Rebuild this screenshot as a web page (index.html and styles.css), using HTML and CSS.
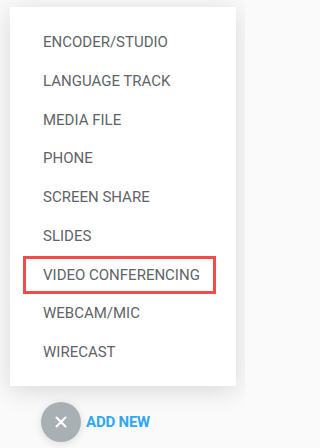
FILE: index.html
```html
<!DOCTYPE html>
<html>
<head>
<meta charset="utf-8">
<link rel="stylesheet" href="styles.css">
</head>
<body>
<div class="page">
  <ul class="menu">
    <li class="item">ENCODER/STUDIO</li>
    <li class="item">LANGUAGE TRACK</li>
    <li class="item">MEDIA FILE</li>
    <li class="item">PHONE</li>
    <li class="item">SCREEN SHARE</li>
    <li class="item">SLIDES</li>
    <li class="item item-selected">VIDEO CONFERENCING</li>
    <li class="item">WEBCAM/MIC</li>
    <li class="item">WIRECAST</li>
  </ul>
  <div class="add-row">
    <button class="close-btn" aria-label="Close">
      <svg width="12" height="12" viewBox="0 0 12 12"><path d="M1.5 1.5 L10.5 10.5 M10.5 1.5 L1.5 10.5" stroke="#fff" stroke-width="2" stroke-linecap="round"/></svg>
    </button>
    <span class="add-label">ADD NEW</span>
  </div>
</div>
</body>
</html>
```
FILE: styles.css
```css
html, body {
  margin: 0;
  padding: 0;
  background: #fafafa;
}
body {
  font-family: Roboto, "Liberation Sans", sans-serif;
  width: 245px;
  height: 448px;
  overflow: hidden;
}
.page {
  padding: 7px 9px 0 10px;
}
.menu {
  list-style: none;
  margin: 0;
  padding: 16px 0 14px 0;
  background: #fff;
  box-shadow: 0 4px 24px rgba(0, 0, 0, 0.14);
}
.item {
  font-size: 15px;
  line-height: 18.75px;
  padding: 10px 0 10px 33px;
  color: #5f6469;
}
.item-selected {
  margin: 0 20px 0 13px;
  padding-left: 20px;
  box-shadow: inset 0 0 0 3px #f44a4a;
}
.add-row {
  display: flex;
  align-items: center;
  gap: 5px;
  margin: 16px 0 0 31px;
}
.close-btn {
  width: 40px;
  height: 40px;
  border: none;
  border-radius: 50%;
  background: #a9b0b4;
  padding: 0;
  display: flex;
  align-items: center;
  justify-content: center;
  box-shadow: 0 2px 8px rgba(0, 0, 0, 0.12);
}
.add-label {
  font-size: 15px;
  font-weight: 700;
  color: #2fa8f0;
  letter-spacing: -0.2px;
}
```
